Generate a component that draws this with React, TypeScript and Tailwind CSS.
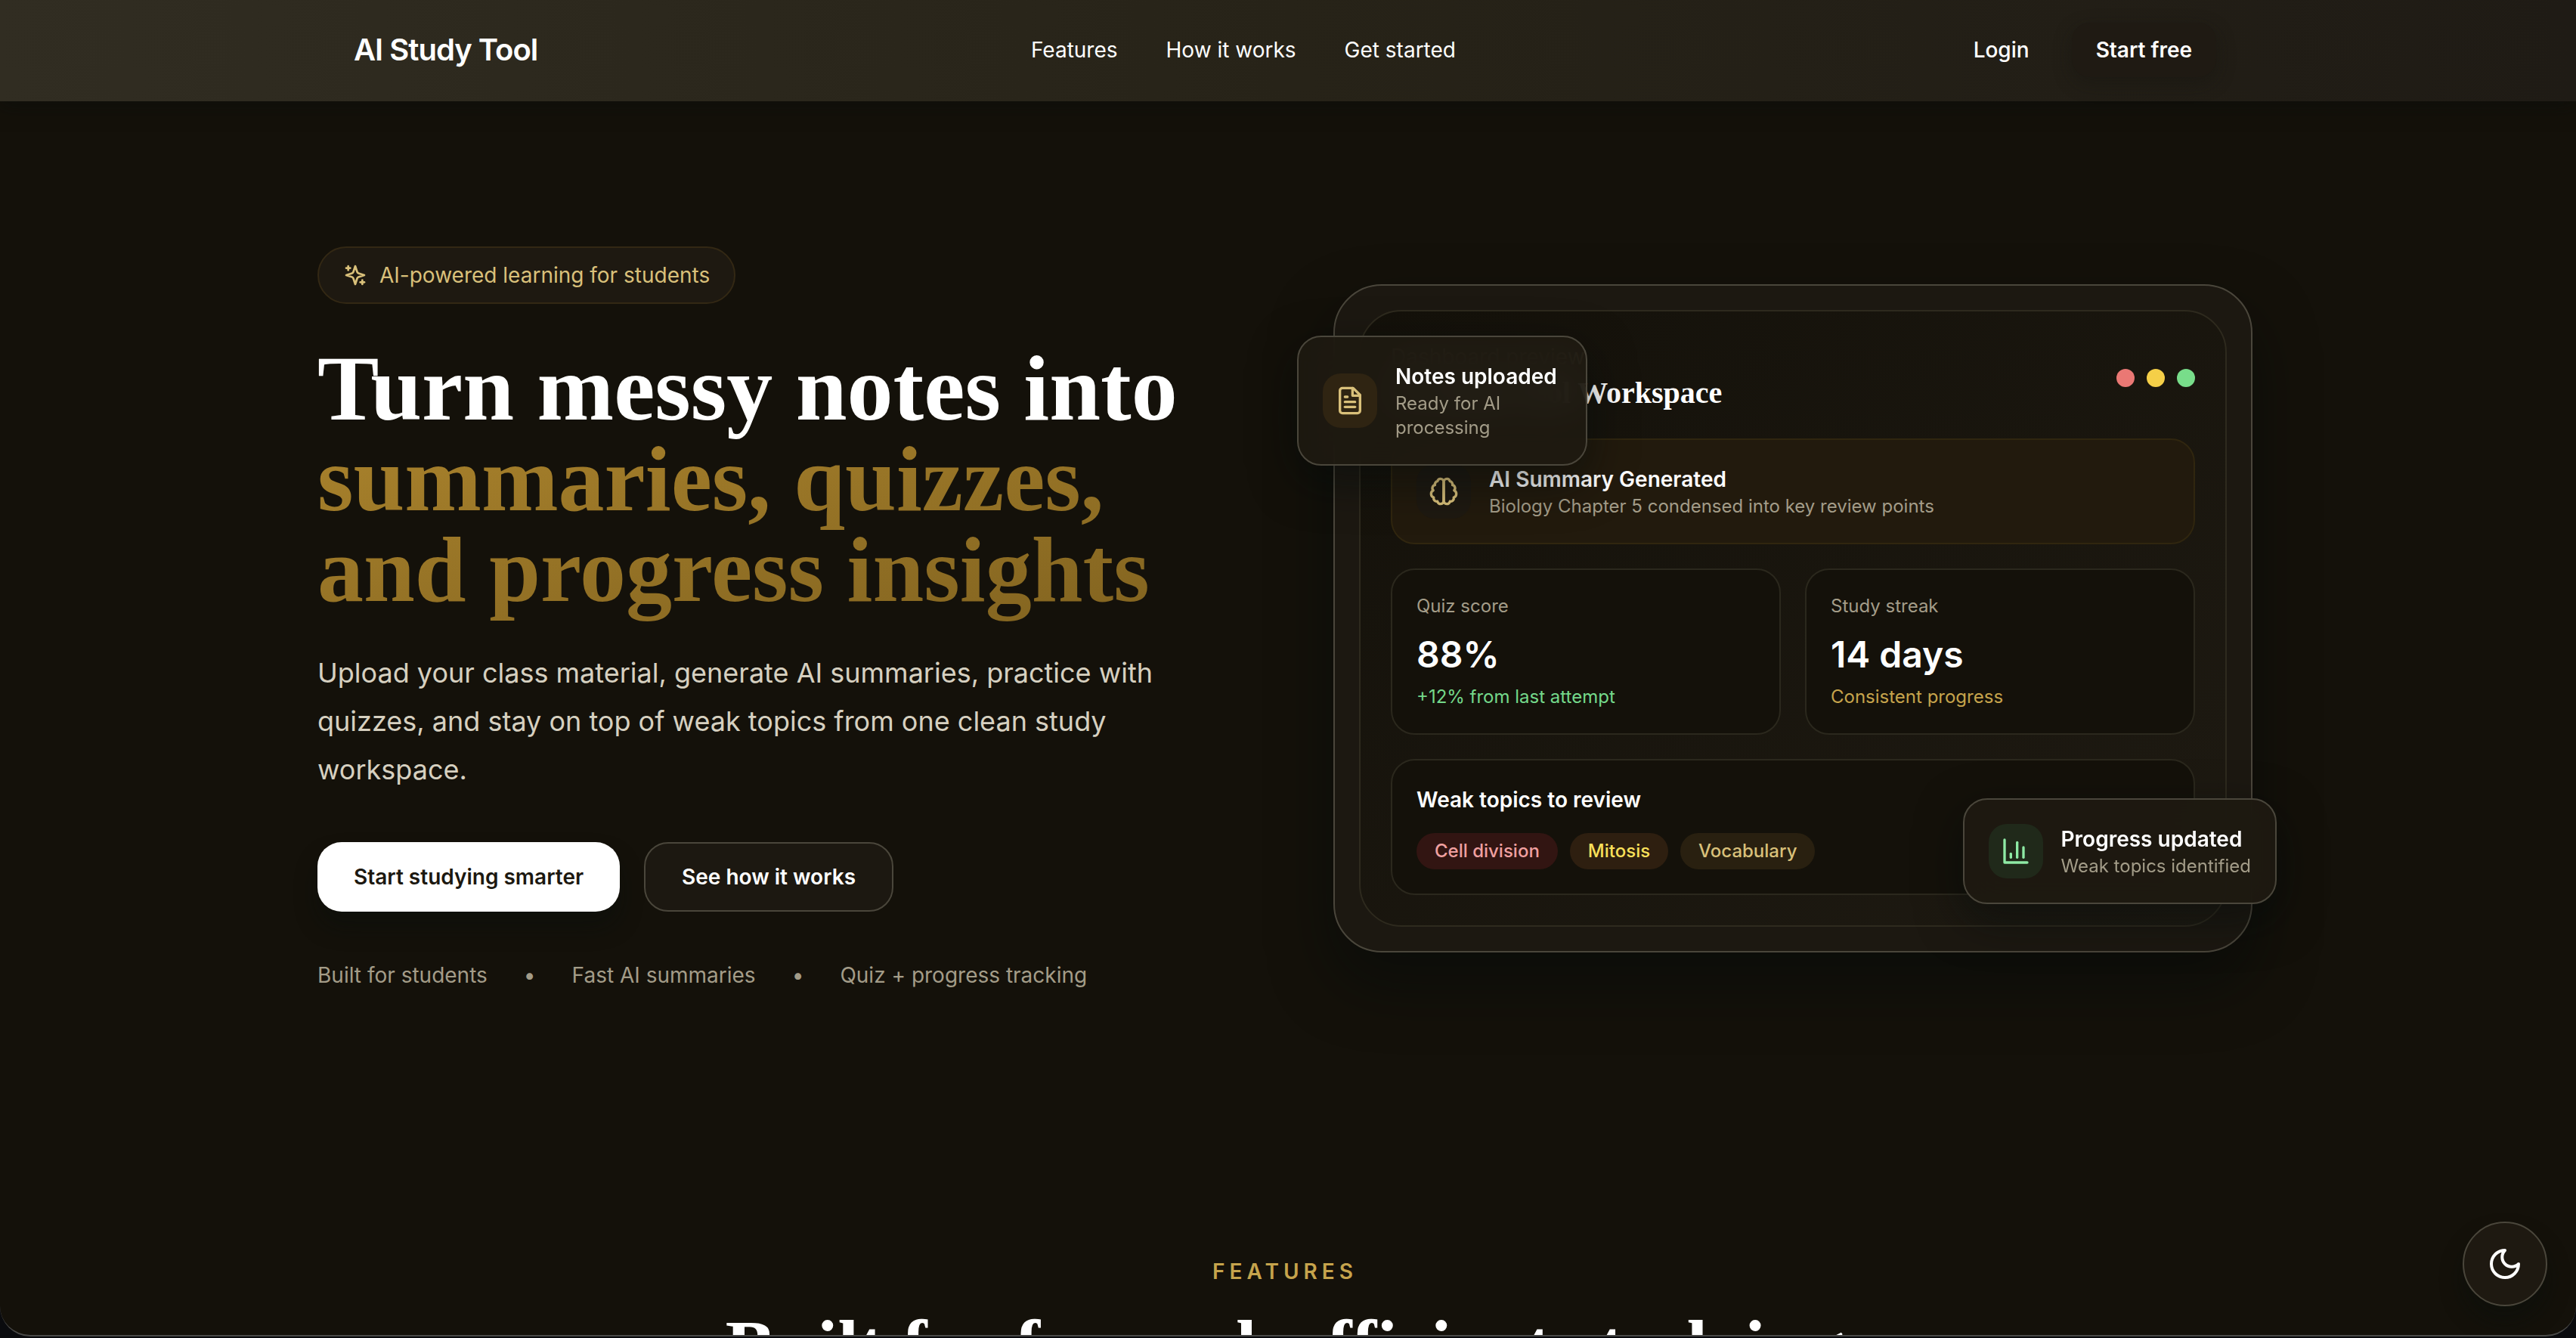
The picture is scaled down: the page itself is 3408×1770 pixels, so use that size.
import React from 'react';

interface Stat {
  label: string;
  value: string;
  note: string;
  noteClass: string;
}

interface Topic {
  name: string;
  className: string;
}

const navLinks = [
  { label: 'Features', href: '#features' },
  { label: 'How it works', href: '#how-it-works' },
  { label: 'Get started', href: '#get-started' },
];

const stats: Stat[] = [
  { label: 'Quiz score', value: '88%', note: '+12% from last attempt', noteClass: 'text-[#74d98a]' },
  { label: 'Study streak', value: '14 days', note: 'Consistent progress', noteClass: 'text-[#c6a44c]' },
];

const topics: Topic[] = [
  { name: 'Cell division', className: 'bg-[#321512] text-[#f0a0a0]' },
  { name: 'Mitosis', className: 'bg-[#2e1f10] text-[#fae05a]' },
  { name: 'Vocabulary', className: 'bg-[#292010] text-[#d9c07a]' },
];

const iconPaths = {
  sparkles: [
    'm12 3-1.912 5.813a2 2 0 0 1-1.275 1.275L3 12l5.813 1.912a2 2 0 0 1 1.275 1.275L12 21l1.912-5.813a2 2 0 0 1 1.275-1.275L21 12l-5.813-1.912a2 2 0 0 1-1.275-1.275L12 3Z',
    'M5 3v4',
    'M19 17v4',
    'M3 5h4',
    'M17 19h4',
  ],
  brain: [
    'M9.5 2A2.5 2.5 0 0 1 12 4.5v15a2.5 2.5 0 0 1-4.96.44 2.5 2.5 0 0 1-2.96-3.08 3 3 0 0 1-.34-5.58 2.5 2.5 0 0 1 1.32-4.24 2.5 2.5 0 0 1 1.98-3A2.5 2.5 0 0 1 9.5 2Z',
    'M14.5 2A2.5 2.5 0 0 0 12 4.5v15a2.5 2.5 0 0 0 4.96.44 2.5 2.5 0 0 0 2.96-3.08 3 3 0 0 0 .34-5.58 2.5 2.5 0 0 0-1.32-4.24 2.5 2.5 0 0 0-1.98-3A2.5 2.5 0 0 0 14.5 2Z',
  ],
  file: [
    'M14.5 2H6a2 2 0 0 0-2 2v16a2 2 0 0 0 2 2h12a2 2 0 0 0 2-2V7.5L14.5 2z',
    'M14 2v6h6',
    'M16 13H8',
    'M16 17H8',
    'M10 9H8',
  ],
  chart: ['M3 3v18h18', 'M18 17V9', 'M13 17V5', 'M8 17v-3'],
  moon: ['M12 3a6 6 0 0 0 9 9 9 9 0 1 1-9-9Z'],
};

const Icon: React.FC<{ name: keyof typeof iconPaths; className: string }> = ({ name, className }) => {
  return (
    <svg
      viewBox="0 0 24 24"
      fill="none"
      stroke="currentColor"
      strokeWidth="2"
      strokeLinecap="round"
      strokeLinejoin="round"
      aria-hidden="true"
      className={className}
    >
      {iconPaths[name].map((d) => (
        <path key={d} d={d} />
      ))}
    </svg>
  );
};

const Header: React.FC = () => {
  return (
    <header className="relative z-10 bg-linear-to-r from-[#312d22] via-[#272318] to-[#1f1b15] pr-2 pb-[2px] shadow-[0_4px_24px_rgba(8,12,12,0.5)]">
      <div className="mx-auto flex max-w-[2560px] items-center justify-between px-12 py-[30px]">
        <a href="#" className="text-[40px] leading-[56px] font-semibold tracking-tight">AI Study Tool</a>
        <nav className="flex items-center gap-16">
          {navLinks.map((link) => (
            <a key={link.href} href={link.href}>{link.label}</a>
          ))}
        </nav>
        <div className="flex items-center gap-6">
          <a href="#login" className="px-8 py-4 font-medium">Login</a>
          <button className="rounded-3xl bg-[#1f1a13] px-8 py-4 font-semibold shadow-[0_8px_24px_rgba(20,20,14,0.4)]">
            Start free
          </button>
        </div>
      </div>
    </header>
  );
};

const HeroText: React.FC = () => {
  return (
    <div>
      <div className="inline-flex items-center gap-4 rounded-full border-2 border-[#332814] bg-[#1e1911] px-8 py-4 text-[#d9c07a]">
        <Icon name="sparkles" className="size-8" />
        <span>AI-powered learning for students</span>
      </div>
      <h1 className="mt-13 font-['Liberation_Serif',serif] text-[122px] leading-[120px] font-bold">
        Turn messy notes into
        <span className="-mb-4 block bg-linear-to-br from-[#a9822c] to-[#80621f] bg-clip-text pb-4 text-transparent">
          summaries, quizzes, and progress insights
        </span>
      </h1>
      <p className="mt-11 max-w-6xl text-4xl leading-[64px] text-[#d6d0c0]">
        Upload your class material, generate AI summaries, practice with quizzes, and stay on top of weak topics from one clean study workspace.
      </p>
      <div className="mt-16 flex gap-8">
        <button className="h-[92px] rounded-4xl bg-white px-12 font-semibold text-[#1c1810] shadow-[0_20px_30px_rgba(8,14,12,0.4)]">
          Start studying smarter
        </button>
        <button className="h-[92px] rounded-4xl border-2 border-[#4a463b] bg-[#1c1811] px-12 font-semibold">
          See how it works
        </button>
      </div>
      <div className="mt-16 flex gap-12 text-[#a39c88]">
        <span>Built for students</span>
        <span>•</span>
        <span>Fast AI summaries</span>
        <span>•</span>
        <span>Quiz + progress tracking</span>
      </div>
    </div>
  );
};

const StatCard: React.FC<{ stat: Stat }> = ({ stat }) => {
  return (
    <div className="rounded-4xl border-2 border-[#2b281d] bg-[#14110a] p-8">
      <p className="text-2xl text-[#a39c88]">{stat.label}</p>
      <p className="mt-4 text-5xl leading-[64px] font-semibold">{stat.value}</p>
      <p className={`mt-2 text-2xl ${stat.noteClass}`}>{stat.note}</p>
    </div>
  );
};

const WorkspacePreview: React.FC = () => {
  return (
    <div className="relative rounded-[64px] border-2 border-[#4a463b] bg-[#1c1811] p-8 shadow-[0_40px_80px_rgba(4,10,9,0.5)]">
      <div className="rounded-[56px] border-2 border-[#2e2a1e] bg-linear-to-br from-[#14110a] to-[#1e1a12] p-10">
        <div className="flex items-center justify-between">
          <div>
            <p className="text-[#a39c88]">Dashboard preview</p>
            <h2 className="font-['Liberation_Serif',serif] text-[40px] leading-[56px] font-bold">AI Study Tool Workspace</h2>
          </div>
          <div className="flex gap-4">
            <span className="size-6 rounded-full bg-[#ea7874]" />
            <span className="size-6 rounded-full bg-[#f5cf48]" />
            <span className="size-6 rounded-full bg-[#78dd8a]" />
          </div>
        </div>

        <div className="mt-8 flex items-center gap-6 rounded-4xl border-2 border-[#30260f] bg-[#221a0d] p-8">
          <div className="flex size-[72px] items-center justify-center rounded-3xl bg-[#1e1911] text-[#d9c07a]">
            <Icon name="brain" className="size-10" />
          </div>
          <div>
            <h3 className="font-semibold">AI Summary Generated</h3>
            <p className="text-2xl text-[#a39c88]">Biology Chapter 5 condensed into key review points</p>
          </div>
        </div>

        <div className="mt-8 grid grid-cols-2 gap-8">
          {stats.map((stat) => (
            <StatCard key={stat.label} stat={stat} />
          ))}
        </div>

        <div className="mt-8 rounded-4xl border-2 border-[#2b281d] bg-[#14110a] p-8">
          <h3 className="font-semibold">Weak topics to review</h3>
          <div className="mt-6 flex gap-4">
            {topics.map((topic) => (
              <span key={topic.name} className={`rounded-full px-6 py-2 text-2xl font-medium ${topic.className}`}>
                {topic.name}
              </span>
            ))}
          </div>
        </div>
      </div>

      {/* floating notifications */}
      <div className="absolute top-[66px] -left-[50px] flex w-96 items-center gap-6 rounded-4xl border-2 border-[#4a463b] bg-[#1e1911]/90 p-8 shadow-[0_20px_60px_rgba(4,10,9,0.5)] backdrop-blur-xl">
        <div className="flex size-[72px] shrink-0 items-center justify-center rounded-3xl bg-[#2f2412] text-[#d9c07a]">
          <Icon name="file" className="size-10" />
        </div>
        <div>
          <p className="font-semibold whitespace-nowrap">Notes uploaded</p>
          <p className="text-2xl text-[#a39c88]">Ready for AI processing</p>
        </div>
      </div>
      <div className="absolute -right-[34px] bottom-[62px] flex items-center gap-6 rounded-4xl border-2 border-[#4a463b] bg-[#1e1911]/95 p-8 shadow-[0_20px_60px_rgba(4,10,9,0.5)] backdrop-blur-xl">
        <div className="flex size-[72px] shrink-0 items-center justify-center rounded-3xl bg-[#20291a] text-[#8eeaa5]">
          <Icon name="chart" className="size-10" />
        </div>
        <div>
          <p className="font-semibold">Progress updated</p>
          <p className="text-2xl text-[#a39c88]">Weak topics identified</p>
        </div>
      </div>
    </div>
  );
};

const App: React.FC = () => {
  return (
    <div className="h-screen bg-[#0a0b0e] pb-[2px] font-[Inter,sans-serif] text-[28px] leading-[40px] text-white">
      <div className="relative h-full overflow-hidden rounded-b-[40px] border-b-2 border-[#4a4a48] bg-[#14110a]">
        <Header />
        <main className="pr-2">
          <section className="mx-auto grid max-w-[2560px] grid-cols-2 items-center gap-32 py-48">
            <HeroText />
            <WorkspacePreview />
          </section>
          <section id="features" className="mx-auto max-w-[2560px] py-40 text-center">
            <p className="font-semibold tracking-[6px] text-[#c6a44c] uppercase">Features</p>
            <h2 className="mt-8 font-['Liberation_Serif',serif] text-[99px] leading-[96px] font-bold">
              Built for focused, efficient studying
            </h2>
          </section>
        </main>
        <button
          aria-label="Toggle theme"
          className="absolute right-[38px] bottom-[38px] flex size-28 items-center justify-center rounded-full border-2 border-[#4a463b] bg-[#1e1911] shadow-[0_20px_30px_rgba(8,14,12,0.4)]"
        >
          <Icon name="moon" className="size-12" />
        </button>
      </div>
    </div>
  );
};

export default App;
